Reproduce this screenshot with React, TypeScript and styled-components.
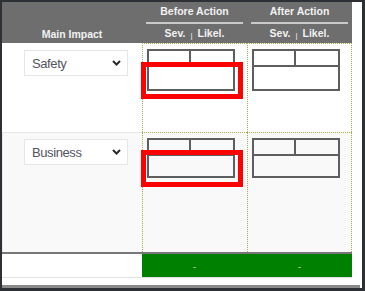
import React, { FC } from 'react';
import styled, { createGlobalStyle } from 'styled-components';

const GlobalStyle = createGlobalStyle`
  html, body {
    margin: 0;
    padding: 0;
    background: #ffffff;
  }
  body {
    font-family: "Liberation Sans", Arial, sans-serif;
  }
`;

const Frame = styled.div`
  width: 365px;
  height: 291px;
  box-sizing: border-box;
  border: 2px solid #2d3035;
  border-right-width: 3px;
  border-bottom-width: 3px;
  background: #ffffff;
  display: flex;
  flex-direction: column;
  overflow: hidden;
`;

const Table = styled.div`
  width: 350px;
  display: flex;
  flex-direction: column;
`;

const Row = styled.div<{ $height: number; $shade?: boolean }>`
  display: grid;
  grid-template-columns: 140px 105px 105px;
  height: ${p => p.$height}px;
  background: ${p => (p.$shade ? '#f9f9f9' : '#ffffff')};
`;

const HeaderRow = styled.div`
  display: grid;
  grid-template-columns: 140px 105px 105px;
  height: 41px;
  background: #6e6e6e;
  color: #f2f2f2;
  font-size: 10.5px;
  font-weight: bold;
`;

const MainHead = styled.div`
  align-self: end;
  text-align: center;
  line-height: 18px;
  padding-bottom: 1px;
`;

const GroupHead = styled.div`
  display: flex;
  flex-direction: column;
  align-items: stretch;
  text-align: center;
  padding-top: 1px;
`;

const GroupTitle = styled.div`
  line-height: 16px;
  margin-bottom: 3px;
`;

const GroupRule = styled.div`
  height: 2px;
  margin: 0 4px;
  background: #c9c9c9;
`;

const SubHead = styled.div`
  line-height: 18px;
`;

const Pipe = styled.span`
  font-size: 8px;
  font-weight: normal;
  margin: 0 5px;
  position: relative;
  top: 1px;
`;

const ImpactCell = styled.div<{ $boxed?: boolean }>`
  box-sizing: border-box;
  border-top: ${p => (p.$boxed ? '1px solid #e8e8e8' : 'none')};
  border-left: ${p => (p.$boxed ? '1px solid #e8e8e8' : 'none')};
  padding-left: ${p => (p.$boxed ? 21 : 22)}px;
  padding-top: ${p => (p.$boxed ? 6 : 7)}px;
`;

const SelectBox = styled.div`
  width: 104px;
  height: 26px;
  box-sizing: border-box;
  border: 1px solid #e6e6e6;
  background: #ffffff;
  display: flex;
  align-items: center;
  justify-content: space-between;
  padding: 0 6px 0 7px;
  font-size: 13px;
  letter-spacing: -0.4px;
  color: #545460;
`;

const ScoreCell = styled.div<{ $last?: boolean }>`
  position: relative;
  box-sizing: border-box;
  border-top: 1px dotted #a9a955;
  border-left: 1px dotted #a9a955;
  border-right: ${p => (p.$last ? '1px dotted #a9a955' : 'none')};
  padding: 5px 0 0 4px;
`;

const ScoreGrid = styled.div`
  width: 88px;
  box-sizing: border-box;
  border: 2px solid #5e5e5e;
  display: flex;
  flex-direction: column;
`;

const ScoreTop = styled.div`
  display: flex;
  height: 14px;
  border-bottom: 2px solid #5e5e5e;
`;

const ScorePart = styled.div<{ $divider?: boolean }>`
  width: ${p => (p.$divider ? 41 : 43)}px;
  border-right: ${p => (p.$divider ? '2px solid #5e5e5e' : 'none')};
`;

const ScoreBottom = styled.div<{ $h: number }>`
  height: ${p => p.$h}px;
`;

const Highlight = styled.div<{ $top: number; $h: number }>`
  position: absolute;
  left: -2px;
  top: ${p => p.$top}px;
  width: 102px;
  height: ${p => p.$h}px;
  box-sizing: border-box;
  border: 5px solid #ff0000;
`;

const FooterRow = styled.div`
  display: grid;
  grid-template-columns: 140px 210px;
  height: 23px;
  border-top: 2px solid #777777;
  border-bottom: 1px solid #e2e2e2;
`;

const Blank = styled.div`
  background: #ffffff;
`;

const ResultBar = styled.div`
  display: grid;
  grid-template-columns: 105px 105px;
  background: #008000;
`;

const ResultCell = styled.div`
  display: flex;
  align-items: center;
  justify-content: center;
  color: #cfe8c8;
  font-size: 9px;
  padding-top: 2px;
`;

const Spacer = styled.div`
  flex: 1;
`;

const ScrollThumb = styled.div`
  height: 3px;
  margin-right: 2px;
  background: #8a8a8a;
`;

const Chevron: FC = () => (
  <svg width="9" height="6" viewBox="0 0 9 6">
    <path d="M1 1 L4.5 4.5 L8 1" fill="none" stroke="#2a2a2a" strokeWidth="2" />
  </svg>
);

const Score: FC<{ bottom: number; flagged?: boolean; flagTop?: number; last?: boolean }> = ({
  bottom,
  flagged,
  flagTop = 19,
  last,
}) => (
  <ScoreCell $last={last}>
    <ScoreGrid>
      <ScoreTop>
        <ScorePart $divider />
        <ScorePart />
      </ScoreTop>
      <ScoreBottom $h={bottom} />
    </ScoreGrid>
    {flagged && <Highlight $top={flagTop} $h={37} />}
  </ScoreCell>
);

const App: FC = () => {
  const rows = [
    { impact: 'Safety', height: 89, shade: false, bottom: 22 },
    { impact: 'Business', height: 120, shade: true, bottom: 20 },
  ];

  return (
    <>
      <GlobalStyle />
      <Frame>
        <Table>
          <HeaderRow>
            <MainHead>Main Impact</MainHead>
            {['Before Action', 'After Action'].map(title => (
              <GroupHead key={title}>
                <GroupTitle>{title}</GroupTitle>
                <GroupRule />
                <SubHead>
                  Sev.<Pipe>|</Pipe>Likel.
                </SubHead>
              </GroupHead>
            ))}
          </HeaderRow>
          {rows.map((row, i) => (
            <Row key={row.impact} $height={row.height} $shade={row.shade}>
              <ImpactCell $boxed={i > 0}>
                <SelectBox>
                  {row.impact}
                  <Chevron />
                </SelectBox>
              </ImpactCell>
              <Score bottom={row.bottom} flagged flagTop={i === 0 ? 18 : 17} />
              <Score bottom={row.bottom} last />
            </Row>
          ))}
          <FooterRow>
            <Blank />
            <ResultBar>
              <ResultCell>-</ResultCell>
              <ResultCell>-</ResultCell>
            </ResultBar>
          </FooterRow>
        </Table>
        <Spacer />
        <ScrollThumb />
      </Frame>
    </>
  );
};

export default App;
